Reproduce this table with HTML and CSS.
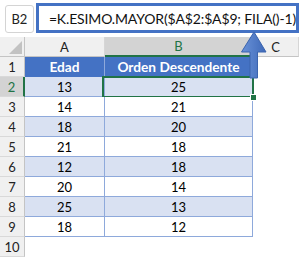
FILE: index.html
```html
<!DOCTYPE html>
<html>
<head>
<meta charset="utf-8">
<link rel="stylesheet" href="styles.css">
</head>
<body>
<div class="top">
  <div class="namebox">B2</div>
  <div class="formula">=K.ESIMO.MAYOR($A$2:$A$9; FILA()-1)</div>
</div>
<div class="sheet">
  <div class="corner"><span class="tri"></span></div>
  <div class="ch">A</div>
  <div class="ch sel">B</div>
  <div class="ch">C</div>

  <div class="rh">1</div>
  <div class="c th">Edad</div>
  <div class="c th">Orden Descendente</div>
  <div class="e"></div>

  <div class="rh sel">2</div>
  <div class="c alt">13</div>
  <div class="c alt active">25<span class="handle"></span></div>
  <div class="e"></div>

  <div class="rh">3</div>
  <div class="c">14</div>
  <div class="c">21</div>
  <div class="e"></div>

  <div class="rh">4</div>
  <div class="c alt">18</div>
  <div class="c alt">20</div>
  <div class="e"></div>

  <div class="rh">5</div>
  <div class="c">21</div>
  <div class="c">18</div>
  <div class="e"></div>

  <div class="rh">6</div>
  <div class="c alt">12</div>
  <div class="c alt">18</div>
  <div class="e"></div>

  <div class="rh">7</div>
  <div class="c">20</div>
  <div class="c">14</div>
  <div class="e"></div>

  <div class="rh">8</div>
  <div class="c alt">25</div>
  <div class="c alt">13</div>
  <div class="e"></div>

  <div class="rh">9</div>
  <div class="c">18</div>
  <div class="c">12</div>
  <div class="e"></div>

  <div class="rh">10</div>
  <div class="e"></div>
  <div class="e"></div>
  <div class="e"></div>
</div>
<svg class="arrow" width="28" height="50" viewBox="0 0 28 50">
  <defs>
    <linearGradient id="ag" x1="0" y1="0" x2="1" y2="0">
      <stop offset="0" stop-color="#6a92d8"/>
      <stop offset="1" stop-color="#3e69b8"/>
    </linearGradient>
  </defs>
  <path d="M14 2 L1.5 22 L10 22 L10 48 L17.5 48 L17.5 22 L26 22 Z" fill="url(#ag)" stroke="#3b64ae" stroke-width="1" stroke-linejoin="round"/>
</svg>
</body>
</html>
```

FILE: styles.css
```css
html, body {
  margin: 0;
  padding: 0;
  background: #ffffff;
}
body {
  width: 299px;
  height: 258px;
  overflow: hidden;
  position: relative;
  font-family: Lato, "Liberation Sans", sans-serif;
  color: #000;
}
.top {
  display: flex;
  align-items: flex-start;
  height: 37px;
  box-sizing: border-box;
  padding: 3px 0 0 5px;
}
.namebox {
  margin-top: 2px;
  width: 30px;
  height: 28px;
  box-sizing: border-box;
  border: 1px solid #d4d4d4;
  border-radius: 3px;
  display: flex;
  align-items: center;
  justify-content: center;
  font-size: 13px;
  color: #222;
}
.formula {
  margin-left: 2px;
  flex: 1;
  height: 30px;
  box-sizing: border-box;
  border: 3px solid #4472c4;
  display: flex;
  align-items: center;
  padding-left: 10px;
  font-size: 14px;
  letter-spacing: -0.15px;
  color: #111;
  white-space: nowrap;
}
.sheet {
  display: grid;
  grid-template-columns: 25px 80px 148px 46px;
  grid-auto-rows: 20px;
  font-size: 13px;
}
.sheet > div {
  box-sizing: border-box;
  display: flex;
  align-items: center;
  justify-content: center;
}
.corner {
  background: #f0f0f0;
  border-right: 1px solid #c4c4c4;
  border-bottom: 1px solid #c4c4c4;
  position: relative;
}
.tri {
  position: absolute;
  right: 2px;
  bottom: 2px;
  width: 0;
  height: 0;
  border-left: 13px solid transparent;
  border-bottom: 13px solid #c2c2c2;
}
.ch {
  background: #f0f0f0;
  border-right: 1px solid #d6d6d6;
  border-bottom: 1px solid #c4c4c4;
  color: #222;
  font-size: 13px;
}
.ch.sel {
  background: #d3d3d3;
  color: #217346;
  border-bottom: 2px solid #217346;
  border-right-color: #c4c4c4;
}
.rh {
  background: #f0f0f0;
  border-right: 1px solid #c4c4c4;
  border-bottom: 1px solid #d9d9d9;
  color: #222;
}
.rh.sel {
  background: #d3d3d3;
  color: #217346;
  border-right: 2px solid #217346;
}
.c {
  border-right: 1px solid #8ea9db;
  border-bottom: 1px solid #8ea9db;
  background: #ffffff;
  position: relative;
}
.c.alt {
  background: #d9e1f2;
}
.c.th {
  background: #4472c4;
  color: #ffffff;
  font-weight: bold;
  font-size: 13.7px;
  border-right-color: #8ea9db;
  border-bottom-color: #4472c4;
}
.active::after {
  content: "";
  position: absolute;
  left: -3px;
  top: -1px;
  right: -2px;
  bottom: -2px;
  border: 2px solid #217346;
  pointer-events: none;
}
.handle {
  position: absolute;
  right: -5px;
  bottom: -5px;
  width: 5px;
  height: 5px;
  background: #217346;
  border: 1px solid #ffffff;
  z-index: 2;
}
.e {
  background: #ffffff;
}
.arrow {
  position: absolute;
  left: 240px;
  top: 30px;
}
```
